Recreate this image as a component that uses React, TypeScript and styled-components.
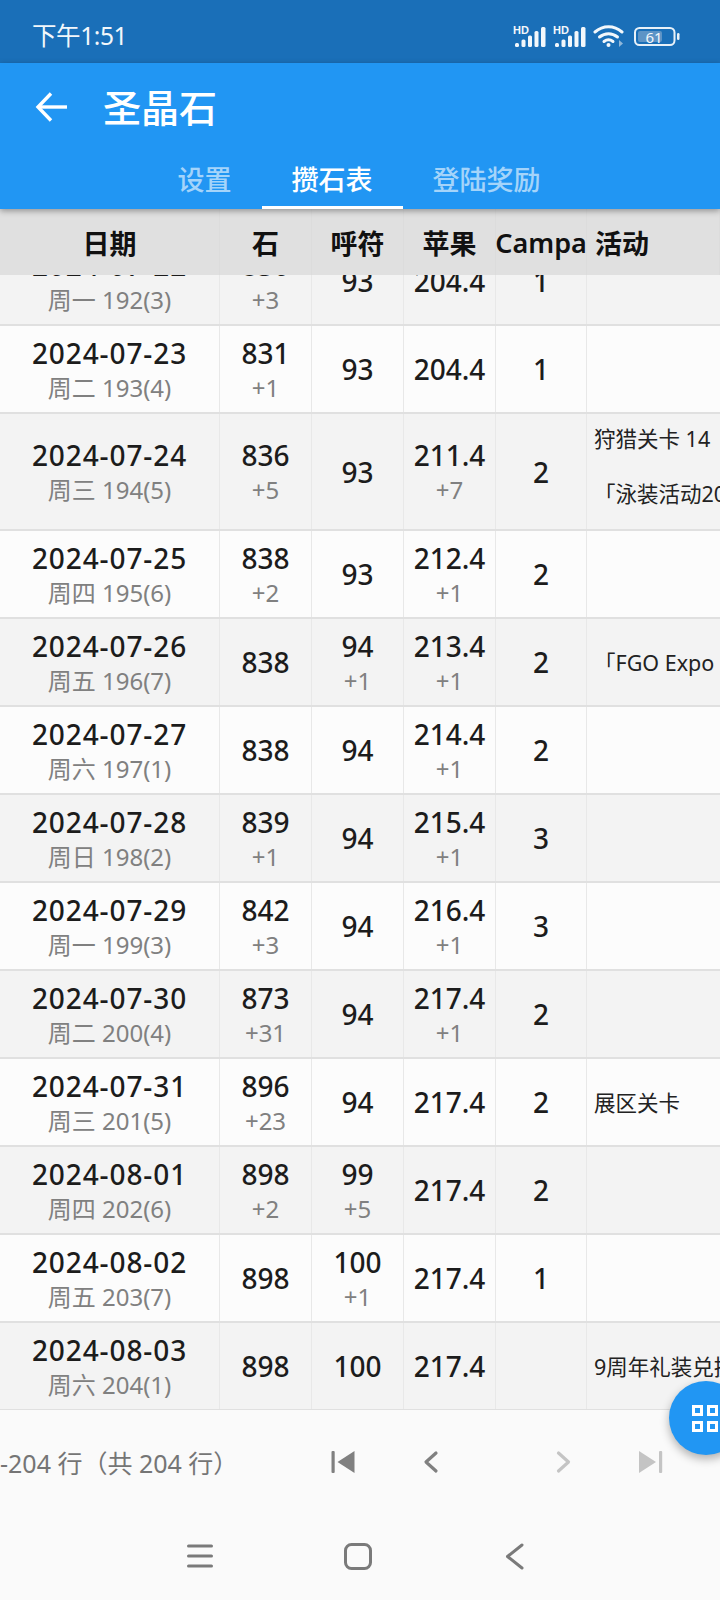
import React from "react";
import styled, { createGlobalStyle } from "styled-components";

const Global = createGlobalStyle`
  html, body { margin: 0; padding: 0; background: #fafafa; }
  * { box-sizing: border-box; }
`;

const FONT = `"Noto Sans", "Noto Sans CJK SC", sans-serif`;

const Screen = styled.div`
  position: relative;
  width: 720px;
  height: 1600px;
  overflow: hidden;
  display: flex;
  flex-direction: column;
  background: #fafafa;
  font-family: ${FONT};
`;

const StatusBar = styled.div`
  height: 63px;
  flex: none;
  background: #1a6fb8;
  color: #f2f7fb;
  display: flex;
  align-items: center;
  justify-content: space-between;
  padding: 9px 40px 0 32px;
`;

const Time = styled.span`
  font-size: 24.5px;
  line-height: 30px;
  letter-spacing: -0.4px;
`;

const StatusIcons = styled.div`
  display: flex;
  align-items: center;
  gap: 7px;
`;

const BatteryBox = styled.div`
  display: flex;
  margin-left: 3px;
`;

const AppBar = styled.header`
  flex: none;
  height: 146px;
  background: #2196f3;
  color: #fff;
  display: flex;
  flex-direction: column;
  position: relative;
  z-index: 3;
  box-shadow: 0 2px 6px rgba(0, 0, 0, 0.35);
`;

const TitleRow = styled.div`
  height: 88px;
  display: flex;
  align-items: center;
  padding-left: 35px;
  gap: 34px;
`;

const Title = styled.h1`
  margin: 0;
  font-size: 38px;
  line-height: 44px;
  font-weight: 500;
`;

const Tabs = styled.nav`
  flex: 1;
  display: flex;
  justify-content: center;
  padding-right: 2px;
`;

const Tab = styled.div<{ $active?: boolean }>`
  padding: 0 30px;
  display: flex;
  align-items: center;
  font-size: 27px;
  font-weight: 500;
  color: ${(p) => (p.$active ? "#fff" : "rgba(255,255,255,0.6)")};
  border-bottom: 3px solid ${(p) => (p.$active ? "#fff" : "transparent")};
`;

const COLS = "220px 92px 92px 92px 91px 1fr";

const HeaderRow = styled.div`
  flex: none;
  height: 66px;
  display: grid;
  grid-template-columns: ${COLS};
  background: #e0e0e0;
  position: relative;
  z-index: 2;
`;

const HeadCell = styled.div<{ $left?: boolean }>`
  display: flex;
  align-items: center;
  justify-content: ${(p) => (p.$left ? "flex-start" : "center")};
  padding-left: ${(p) => (p.$left ? "8px" : "0")};
  font-size: 27px;
  font-weight: 600;
  color: #111;
  overflow: hidden;
  white-space: nowrap;
  border-right: 1px solid #dcdcdc;
`;

const Clip = styled.div`
  flex: none;
  height: 1135px;
  overflow: hidden;
`;

const Body = styled.div`
  margin-top: -37px;
`;

const Row = styled.div<{ $odd: boolean; $tall?: boolean }>`
  height: ${(p) => (p.$tall ? "117px" : "88px")};
  display: grid;
  grid-template-columns: ${COLS};
  background: ${(p) => (p.$odd ? "#f3f3f3" : "#fcfcfc")};
  border-bottom: 2px solid #e0e0e0;
`;

const Cell = styled.div<{ $single?: boolean }>`
  display: flex;
  flex-direction: column;
  align-items: center;
  justify-content: center;
  padding-top: ${(p) => (p.$single ? "0" : "2px")};
  border-right: 1px solid #e8e8e8;
  overflow: hidden;
`;

const Main = styled.div<{ $spaced?: boolean }>`
  font-size: 28px;
  font-weight: 500;
  line-height: 34px;
  letter-spacing: ${(p) => (p.$spaced ? "0.9px" : "0")};
  color: #1c1c1c;
  white-space: nowrap;
`;

const Sub = styled.div`
  font-size: 24px;
  line-height: 35px;
  color: #808080;
  white-space: nowrap;
`;

const EventCell = styled.div<{ $tall?: boolean }>`
  display: flex;
  flex-direction: column;
  justify-content: center;
  padding: ${(p) => (p.$tall ? "0 0 10px 7px" : "2px 0 0 7px")};
  overflow: hidden;
`;

const EventLine = styled.div`
  font-size: 21.5px;
  line-height: 27.5px;
  min-height: 27.5px;
  color: #222;
  white-space: nowrap;
`;

const Pager = styled.div`
  flex: none;
  height: 96px;
  padding-top: 7px;
  display: flex;
  align-items: center;
`;

const PagerText = styled.div`
  width: 226px;
  font-size: 25px;
  color: #757575;
  white-space: nowrap;
  margin-right: 105px;
`;

const PagerButton = styled.div<{ $w: number; $dim?: boolean }>`
  width: ${(p) => p.$w}px;
  flex: none;
  display: flex;
  align-items: center;
  color: ${(p) => (p.$dim ? "#c4c4c4" : "#808080")};
`;

const NavBar = styled.div`
  flex: 1;
  display: flex;
  align-items: center;
  padding: 6px 0 0 187px;
  color: #7a7a7a;
`;

const NavSlot = styled.div<{ $w: number }>`
  width: ${(p) => p.$w}px;
  flex: none;
  display: flex;
`;

const Fab = styled.div`
  position: absolute;
  left: 669px;
  top: 1381px;
  width: 74px;
  height: 74px;
  border-radius: 50%;
  background: #2196f3;
  box-shadow: 0 4px 10px rgba(0, 0, 0, 0.3);
  display: flex;
  align-items: center;
  padding-left: 23px;
  z-index: 4;
`;

const Signal = () => (
  <svg width="33" height="21" viewBox="0 0 33 21" fill="#f2f7fb">
    <text x="0" y="8" fontSize="11" fontWeight="700" fontFamily="Liberation Sans, sans-serif">HD</text>
    <rect x="2" y="17" width="4" height="4" rx="1.5" />
    <rect x="8.5" y="13.500" width="4" height="7.5" rx="1.5" />
    <rect x="15" y="9.500" width="4" height="11.5" rx="1.5" />
    <rect x="21.5" y="5" width="4" height="16" rx="1.5" />
    <rect x="28" y="1" width="4.5" height="20" rx="1.5" />
  </svg>
);

const Wifi = () => (
  <svg width="31" height="22" viewBox="0 0 31 22" fill="none" stroke="#f2f7fb" strokeWidth="3" strokeLinecap="round">
    <path d="M2 7c8-7 19-7 27 0" />
    <path d="M6.500 12c5.500-4.500 12.500-4.500 18 0" />
    <path d="M11 16.500c3-2.300 6-2.300 9 0" />
    <circle cx="15.5" cy="20" r="2" fill="#f2f7fb" stroke="none" />
    <path d="M26 15l4 3.500-4 3.500z" fill="#8fb7da" stroke="none" />
  </svg>
);

const Battery = () => (
  <svg width="46" height="19" viewBox="0 0 46 19">
    <rect x="1" y="1" width="39.5" height="17" rx="4.5" fill="none" stroke="#e8f1f8" strokeWidth="2" />
    <rect x="4" y="4" width="24" height="11" rx="2" fill="#5d94c6" />
    <text x="20" y="15.5" textAnchor="middle" fontSize="15" fill="#f2f7fb" fontFamily="Noto Sans, sans-serif">61</text>
    <rect x="43" y="6" width="2.5" height="7" rx="1.2" fill="#e8f1f8" />
  </svg>
);

const BackArrow = () => (
  <svg width="34" height="38" viewBox="0 0 34 38" fill="none" stroke="#fff" strokeWidth="3.4">
    <path d="M32 19H3" />
    <path d="M16 5.500 3 19l13 13.500" />
  </svg>
);

type RowData = {
  date: string;
  sub: string;
  stone: string;
  stoneAdd?: string;
  fu: string;
  fuAdd?: string;
  apple: string;
  appleAdd?: string;
  camp: string;
  events?: string[];
};

const rows: RowData[] = [
  { date: "2024-07-22", sub: "周一 192(3)", stone: "830", stoneAdd: "+3", fu: "93", apple: "204.4", camp: "1" },
  { date: "2024-07-23", sub: "周二 193(4)", stone: "831", stoneAdd: "+1", fu: "93", apple: "204.4", camp: "1" },
  { date: "2024-07-24", sub: "周三 194(5)", stone: "836", stoneAdd: "+5", fu: "93", apple: "211.4", appleAdd: "+7", camp: "2", events: ["狩猎关卡 14", "", "「泳装活动2024」"] },
  { date: "2024-07-25", sub: "周四 195(6)", stone: "838", stoneAdd: "+2", fu: "93", apple: "212.4", appleAdd: "+1", camp: "2" },
  { date: "2024-07-26", sub: "周五 196(7)", stone: "838", fu: "94", fuAdd: "+1", apple: "213.4", appleAdd: "+1", camp: "2", events: ["「FGO Expo"] },
  { date: "2024-07-27", sub: "周六 197(1)", stone: "838", fu: "94", apple: "214.4", appleAdd: "+1", camp: "2" },
  { date: "2024-07-28", sub: "周日 198(2)", stone: "839", stoneAdd: "+1", fu: "94", apple: "215.4", appleAdd: "+1", camp: "3" },
  { date: "2024-07-29", sub: "周一 199(3)", stone: "842", stoneAdd: "+3", fu: "94", apple: "216.4", appleAdd: "+1", camp: "3" },
  { date: "2024-07-30", sub: "周二 200(4)", stone: "873", stoneAdd: "+31", fu: "94", apple: "217.4", appleAdd: "+1", camp: "2" },
  { date: "2024-07-31", sub: "周三 201(5)", stone: "896", stoneAdd: "+23", fu: "94", apple: "217.4", camp: "2", events: ["展区关卡"] },
  { date: "2024-08-01", sub: "周四 202(6)", stone: "898", stoneAdd: "+2", fu: "99", fuAdd: "+5", apple: "217.4", camp: "2" },
  { date: "2024-08-02", sub: "周五 203(7)", stone: "898", fu: "100", fuAdd: "+1", apple: "217.4", camp: "1" },
  { date: "2024-08-03", sub: "周六 204(1)", stone: "898", fu: "100", apple: "217.4", camp: "", events: ["9周年礼装兑换"] },
];

const Pair = ({ main, sub, spaced }: { main: string; sub?: string; spaced?: boolean }) => (
  <Cell $single={!sub}>
    <Main $spaced={spaced}>{main}</Main>
    {sub ? <Sub>{sub}</Sub> : null}
  </Cell>
);

export default function App() {
  return (
    <Screen>
      <Global />
      <StatusBar>
        <Time>下午1:51</Time>
        <StatusIcons>
          <Signal />
          <Signal />
          <Wifi />
          <BatteryBox>
            <Battery />
          </BatteryBox>
        </StatusIcons>
      </StatusBar>
      <AppBar>
        <TitleRow>
          <BackArrow />
          <Title>圣晶石</Title>
        </TitleRow>
        <Tabs>
          <Tab>设置</Tab>
          <Tab $active>攒石表</Tab>
          <Tab>登陆奖励</Tab>
        </Tabs>
      </AppBar>
      <HeaderRow>
        <HeadCell>日期</HeadCell>
        <HeadCell>石</HeadCell>
        <HeadCell>呼符</HeadCell>
        <HeadCell>苹果</HeadCell>
        <HeadCell>Campa</HeadCell>
        <HeadCell $left>活动</HeadCell>
      </HeaderRow>
      <Clip>
        <Body>
          {rows.map((r, i) => {
            const tall = r.events?.length === 3;
            return (
              <Row key={r.date} $odd={i % 2 === 0} $tall={tall}>
                <Pair main={r.date} sub={r.sub} spaced />
                <Pair main={r.stone} sub={r.stoneAdd} />
                <Pair main={r.fu} sub={r.fuAdd} />
                <Pair main={r.apple} sub={r.appleAdd} />
                <Pair main={r.camp} />
                <EventCell $tall={tall}>
                  {(r.events ?? []).map((e, j) => (
                    <EventLine key={j}>{e}</EventLine>
                  ))}
                </EventCell>
              </Row>
            );
          })}
        </Body>
      </Clip>
      <Pager>
        <PagerText>-204 行（共 204 行）</PagerText>
        <PagerButton $w={92}>
          <svg width="24" height="24" viewBox="0 0 24 24" fill="currentColor">
            <rect x="0.5" y="1" width="3.2" height="22" rx="1" />
            <path d="M23.500 1v22L6.500 12z" />
          </svg>
        </PagerButton>
        <PagerButton $w={133}>
          <svg width="16" height="24" viewBox="0 0 16 24" fill="none" stroke="currentColor" strokeWidth="3.2" strokeLinecap="round" strokeLinejoin="round">
            <path d="M13 3 3 12l10 9" />
          </svg>
        </PagerButton>
        <PagerButton $w={83} $dim>
          <svg width="16" height="24" viewBox="0 0 16 24" fill="none" stroke="currentColor" strokeWidth="3.2" strokeLinecap="round" strokeLinejoin="round">
            <path d="m2.500 3 10 9-10 9" />
          </svg>
        </PagerButton>
        <PagerButton $w={24} $dim>
          <svg width="24" height="24" viewBox="0 0 24 24" fill="currentColor">
            <rect x="20" y="1" width="3.2" height="22" rx="1" />
            <path d="M0 1v22l17-11z" />
          </svg>
        </PagerButton>
      </Pager>
      <NavBar>
        <NavSlot $w={157}>
          <svg width="26" height="24" viewBox="0 0 26 24" fill="none" stroke="currentColor" strokeWidth="3" strokeLinecap="round">
            <path d="M1.500 2h23M1.500 12h23M1.500 22h23" />
          </svg>
        </NavSlot>
        <NavSlot $w={161}>
          <svg width="28" height="27" viewBox="0 0 28 27" fill="none" stroke="currentColor" strokeWidth="3">
            <rect x="1.500" y="1.500" width="25" height="24" rx="6" />
          </svg>
        </NavSlot>
        <NavSlot $w={20}>
          <svg width="20" height="27" viewBox="0 0 20 27" fill="none" stroke="currentColor" strokeWidth="3" strokeLinecap="round" strokeLinejoin="round">
            <path d="M17 2 2.500 13.500 17 25" />
          </svg>
        </NavSlot>
      </NavBar>
      <Fab>
        <svg width="26" height="27" viewBox="0 0 26 27" fill="none" stroke="#fff" strokeWidth="3">
          <rect x="1.500" y="1.500" width="8" height="8" />
          <rect x="16.500" y="1.500" width="8" height="8" />
          <rect x="1.500" y="17.500" width="8" height="8" />
          <rect x="16.500" y="17.500" width="8" height="8" />
        </svg>
      </Fab>
    </Screen>
  );
}
